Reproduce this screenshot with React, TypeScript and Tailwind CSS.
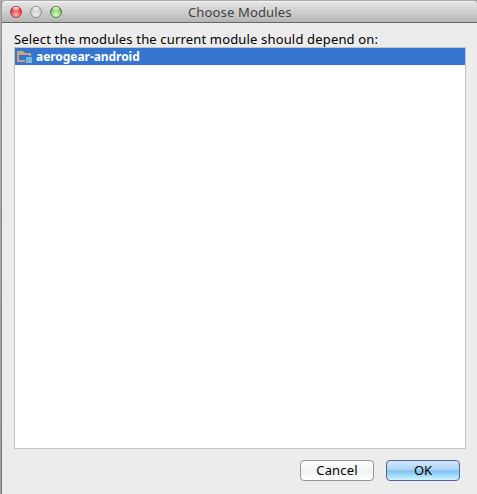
import React from "react";

const LIGHTS = [
  "bg-[radial-gradient(circle_at_50%_80%,#ffc0b5_0%,#f5706a_35%,#e03c42_70%,#b02c30_100%)] border-[#a04346]",
  "bg-[radial-gradient(circle_at_50%_80%,#efefef_0%,#d2d2d2_50%,#b5b5b5_100%)] border-[#909090]",
  "bg-[radial-gradient(circle_at_50%_80%,#dcffc0_0%,#a4dc88_40%,#74b460_70%,#4b8240_100%)] border-[#55804b]",
];

function TrafficLights() {
  return (
    <div className="flex w-[86px] gap-2 pl-2">
      {LIGHTS.map((tone) => (
        <span key={tone} className={`flex h-3 w-3 justify-center rounded-full border ${tone}`}>
          <span className="h-[4px] w-[6px] rounded-full bg-linear-to-b from-white/90 to-white/20" />
        </span>
      ))}
    </div>
  );
}

function ModuleIcon() {
  return (
    <svg width="15" height="14" viewBox="0 0 15 14" className="shrink-0" aria-hidden="true">
      <path fill="#c9a47c" fillRule="evenodd" d="M0 1H6L8 3H14V12H0ZM2 5V10H12V5Z" />
      <path fill="#3575d0" d="M8 6h7v7H8z" />
      <path fill="#78b5d3" d="M9 7h6v6H9z" />
    </svg>
  );
}

export default function App() {
  return (
    <div className="flex h-[494px] w-[477px] bg-linear-to-b from-[#aaa] to-[#858585] pt-px font-['Noto_Sans','Open_Sans',sans-serif] text-[13px] text-black">
      <div className="w-px bg-linear-to-b from-[#aaa] to-[#a0a0a0]" />
      <div className="w-px bg-linear-to-b from-[#999] to-[#777]" />
      <main className="flex flex-1 flex-col overflow-hidden rounded-t-[4px] bg-[#ececec]">
        <header className="flex h-[22px] items-center border-t border-b border-t-[#f5f5f5] border-b-[#686868] bg-linear-to-b from-[#e6e6e6] to-[#b5b5b5]">
          <TrafficLights />
          <h1 className="flex-1 pl-[100px] text-[13px] leading-5 tracking-[0.15px] text-[#404040]">Choose Modules</h1>
        </header>
        <section className="flex flex-col pr-[11px] pl-3">
          <p className="mt-[7px] h-[17px] whitespace-nowrap leading-[18px] tracking-[0.16px]">Select the modules the current module should depend on:</p>
          <div className="h-[402px] border border-[#c4c4c4] bg-white">
            <div className="flex h-[17px] items-center gap-1 bg-[#3475d0] pl-[2px] font-bold leading-[17px] text-white">
              <ModuleIcon />
              <span className="text-[12px] tracking-[-0.05px]">aerogear-android</span>
            </div>
          </div>
        </section>
        <footer className="mt-[11px] flex justify-end gap-3 pr-[17px]">
          <button className="h-[21px] w-[74px] rounded-[4px] border border-[#969696] bg-linear-to-b from-white via-[#f2f2f2] to-white leading-[19px] tracking-[0.15px]">Cancel</button>
          <button className="h-[21px] w-[74px] rounded-[4px] border border-[#5760a0] bg-[linear-gradient(#d5e8fa_0%,#a9d2f5_48%,#82c0f2_52%,#9ed9fb_75%,#d0f7ff_100%)] leading-[19px]">OK</button>
        </footer>
      </main>
    </div>
  );
}
